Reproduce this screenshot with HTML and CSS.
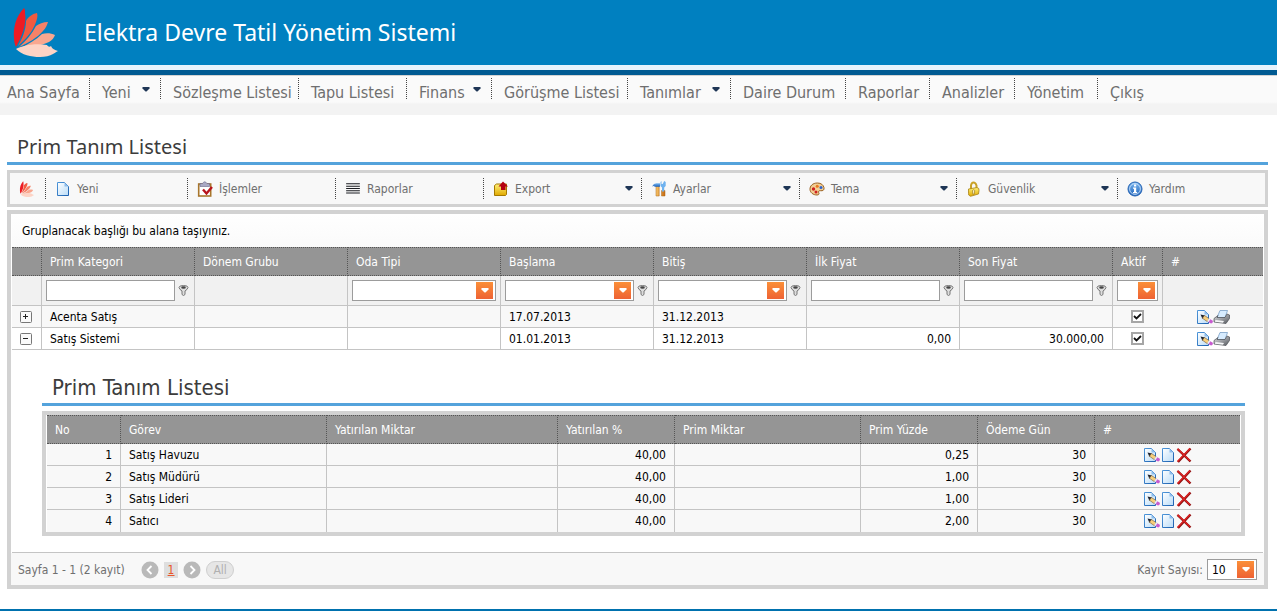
FILE: index.html
```html
<!DOCTYPE html>
<html lang="tr">
<head>
<meta charset="utf-8">
<title>Elektra Devre Tatil Yönetim Sistemi</title>
<link rel="stylesheet" href="styles.css">
</head>
<body>
<svg class="sprite" aria-hidden="true">
  <defs>
    <linearGradient id="paper" x1="0" y1="0" x2="1" y2="1"><stop offset="0" stop-color="#fff"/><stop offset="1" stop-color="#b9dcf8"/></linearGradient>
    <linearGradient id="edge" x1="0" y1="0" x2="1" y2="1"><stop offset="0" stop-color="#4f97da"/><stop offset="1" stop-color="#1c5fae"/></linearGradient>
    <linearGradient id="gold" x1="0" y1="0" x2="0" y2="1"><stop offset="0" stop-color="#fff27a"/><stop offset="1" stop-color="#e0a800"/></linearGradient>
    <linearGradient id="wood" x1="0" y1="0" x2="1" y2="0"><stop offset="0" stop-color="#f8c56a"/><stop offset="1" stop-color="#c66a10"/></linearGradient>
    <linearGradient id="blue" x1="0" y1="0" x2="0" y2="1"><stop offset="0" stop-color="#7db9f2"/><stop offset="1" stop-color="#1a5fb8"/></linearGradient>
    <linearGradient id="steel" x1="0" y1="0" x2="1" y2="1"><stop offset="0" stop-color="#e4e6e9"/><stop offset="1" stop-color="#55585e"/></linearGradient>
    <symbol id="logo" viewBox="0 0 46 50">
      <path fill="#ed1c24" d="M11 1C3 9 0 21 1 31c0 4 1 7 2 9C9 30 14 16 12 6c0-2 0-4-1-5z"/>
      <path fill="#f15a40" d="M24 6c-5 1-9 4-11 8 0 9-4 18-8 25 8-7 15-15 18-24 1-3 2-6 1-9z"/>
      <path fill="#f58268" d="M35 15c-5 0-9 2-12 4-4 8-10 15-17 21 9-4 18-9 24-16 3-3 4-6 5-9z"/>
      <path fill="#f9a78f" d="M42 28c-4-2-9-2-13-1-6 6-14 10-21 14 9-1 20-2 28-6 3-2 5-4 6-7z"/>
      <path fill="#fdd3c5" d="M3 42c6-3 17-6 31-4 1 2 3 2 4 1 1 3 4 4 7 5-2 1-3 2-5 3-3 2-8 3-13 3-9 0-18-2-24-8z"/>
    </symbol>
    <symbol id="page" viewBox="0 0 14 16">
      <path fill="url(#paper)" stroke="url(#edge)" d="M1.500 1.500h7l4 4v9h-11z"/>
      <path fill="#8dbdec" d="M8.500 1.500v4h4z"/>
    </symbol>
    <symbol id="edit" viewBox="0 0 17 16">
      <path fill="url(#paper)" stroke="url(#edge)" d="M1.500 1.500h7l4 4v9h-11z"/>
      <path fill="#8dbdec" d="M8.500 1.500v4h4z"/>
      <path fill="#1f2430" d="M4.500 5.500l4.500 1-2.500 3.500z"/>
      <path fill="#f8cf7b" stroke="#6b5638" stroke-width=".6" d="M8.500 6.500l4.700 3.200-1.800 3-5-3.500z"/>
      <path fill="#e9ecfa" d="M13 9.300l1.500 1-1.800 3-1.500-1z"/>
      <path fill="#c75bd0" d="M14.300 10.300l2.500 1.500q.4 2.400-1.800 2.700l-2.500-1.200z"/>
    </symbol>
    <symbol id="delete" viewBox="0 0 16 16">
      <path fill="none" stroke="#8a1010" stroke-width="2.400" d="M1.500 2L14.500 14.500M14.500 1.500L2 15"/>
      <path fill="none" stroke="#dd2323" stroke-width="1.400" d="M1.500 1.700L14 13.700M14 1.500L1.500 14.500"/>
    </symbol>
    <symbol id="printer" viewBox="0 0 17 16">
      <path fill="#d7ecff" stroke="#7aa0c6" stroke-width=".8" d="M7 1.500h7.500l-2.500 7H4z"/>
      <path fill="url(#steel)" stroke="#4c4f55" stroke-width=".7" d="M1 9.500l4-3-1 2h8l2-3.500 2.500 1v3.500l-3.500 5-12-1.500z"/>
      <path fill="#f6f7f8" d="M2.500 11l8.500 1-1 1.800-8.200-1z"/>
    </symbol>
    <symbol id="tasks" viewBox="0 0 16 16">
      <rect x="1.700" y="3" width="12" height="12" fill="#fff" stroke="#a8762c" stroke-width="1.600"/>
      <path fill="#a9a9c4" stroke="#66668a" stroke-width=".6" d="M3 5.500V2.500H5.500Q7.700-1 10 2.500h2.500v3z"/>
      <path fill="none" stroke="#b8141c" stroke-width="2.400" d="M6 8.500l3.500 4 5.500-6.500"/>
    </symbol>
    <symbol id="lines" viewBox="0 0 14 14">
      <path stroke="#1b1d22" stroke-width=".9" d="M1 2.500h12M1 4.500h12M1 6.500h12M1 8.500h12M1 10.500h12"/>
    </symbol>
    <symbol id="export" viewBox="0 0 16 16">
      <path fill="url(#gold)" stroke="#a47900" d="M1.500 4.500l2-1.500h10v10.500l-1 1h-11z"/>
      <path fill="#b40012" d="M10 .5L15 5.500h-2.500V9h-4.500V5.500H5.500z"/>
    </symbol>
    <symbol id="tools" viewBox="0 0 16 16">
      <path fill="url(#wood)" stroke="#ad6818" stroke-width=".5" d="M5 5h3.200v10H5zM10.500 9.500h3.500V15h-3.500z"/>
      <path fill="url(#blue)" d="M1 5.500Q3 1.800 6 2.300h3v3.500H4Q2.500 4.500 1 5.500z"/>
      <path fill="#6fb2ef" d="M10.500 0v3h1.200l1.500-3 1.500 1v4l-1.500 1.500v4h-2.200v-4L9.500 5V1z"/>
    </symbol>
    <symbol id="palette" viewBox="0 0 16 16">
      <path fill="#f2cf94" stroke="#9a6020" d="M8.500 2C3.500 2 .8 5 1 8.500c.2 3 3 5.500 7 5.500 2 0 2.400-1.200 1.700-2.300-.7-1.500.5-2.300 2-2 2 .4 3.800-.7 3.300-3C14.500 4 12 2 8.500 2z"/>
      <circle cx="4.500" cy="8" r="1.700" fill="#d02020"/><circle cx="8.200" cy="5.200" r="1.500" fill="#e8781e"/><circle cx="7" cy="11" r="1.500" fill="#d02020"/><circle cx="12" cy="6.500" r="1.500" fill="#2c62cf"/>
    </symbol>
    <symbol id="lock" viewBox="0 0 16 16">
      <path fill="none" stroke="#c9a227" stroke-width="2" d="M5 8V4.500Q5.500 1.500 7.500 1.500T10.500 4.500V8"/>
      <path fill="url(#gold)" stroke="#a88314" stroke-width=".8" d="M2.500 8l8.500-1.500q2.500.5 2 3L12.500 13l-8 2.300q-2.500-1-2-3z"/>
      <path fill="#fff8cc" stroke="#8c6a10" stroke-width=".6" d="M6.500 9.500q1.500-1.500 2.200 0L8.200 13l-1.400.3z"/>
    </symbol>
    <symbol id="info" viewBox="0 0 16 16">
      <circle cx="8" cy="8" r="7" fill="url(#blue)" stroke="#2462b2"/><circle cx="8" cy="8" r="5.400" fill="none" stroke="#d6e8fb" stroke-width=".8"/>
      <path fill="#fff" d="M7 3.500h2.200v2H7zM6 6.500h3.200v4.500h1v1.300H6V11h1V7.800H6z"/>
    </symbol>
    <symbol id="filter" viewBox="0 0 11 13">
      <path fill="#ddd" stroke="#777" d="M1 3.500Q1 1.500 5.500 1.500t4.500 2Q9.500 5.500 7 7v3.500l-1.500 1-1.500-1V7Q1.500 5.500 1 3.500z"/>
      <ellipse cx="5.500" cy="3.500" rx="2.300" ry="1.200" fill="#444"/>
    </symbol>
    <symbol id="arrow" viewBox="0 0 8 5"><path fill="currentColor" d="M0.500 0h7v1.500l-3 3h-1l-3-3z"/></symbol>
    <symbol id="plus" viewBox="0 0 12 12"><rect x=".5" y=".5" width="11" height="11" rx="1" fill="#fafafa" stroke="#777"/><path stroke="#222" d="M3 5.500h5M5.500 3v5"/></symbol>
    <symbol id="minus" viewBox="0 0 12 12"><rect x=".5" y=".5" width="11" height="11" rx="1" fill="#fafafa" stroke="#777"/><path stroke="#222" d="M3 5.500h5"/></symbol>
    <symbol id="check" viewBox="0 0 9 9"><path fill="none" stroke="#111" stroke-width="1.800" d="M1 4l2.500 2.500L8 2"/></symbol>
    <symbol id="prev" viewBox="0 0 18 18"><circle cx="9" cy="9" r="8.500" fill="#b9b9b9"/><path fill="none" stroke="#fff" stroke-width="1.800" d="M10.500 5l-4 4 4 4"/></symbol>
    <symbol id="next" viewBox="0 0 18 18"><circle cx="9" cy="9" r="8.500" fill="#b9b9b9"/><path fill="none" stroke="#fff" stroke-width="1.800" d="M7.500 5l4 4-4 4"/></symbol>
  </defs>
</svg>

<header class="header">
  <svg class="logo" role="img" aria-label="Elektra"><use href="#logo"/></svg>
  <div class="brand">Elektra Devre Tatil Yönetim Sistemi</div>
</header>

<nav class="nav">
  <a href="#">Ana Sayfa</a>
  <a href="#">Yeni<svg class="arrow"><use href="#arrow"/></svg></a>
  <a href="#">Sözleşme Listesi</a>
  <a href="#">Tapu Listesi</a>
  <a href="#">Finans<svg class="arrow"><use href="#arrow"/></svg></a>
  <a href="#">Görüşme Listesi</a>
  <a href="#">Tanımlar<svg class="arrow"><use href="#arrow"/></svg></a>
  <a href="#">Daire Durum</a>
  <a href="#">Raporlar</a>
  <a href="#">Analizler</a>
  <a href="#">Yönetim</a>
  <a href="#">Çıkış</a>
</nav>

<main class="main">
  <h1 class="title">Prim Tanım Listesi</h1>

  <div class="toolbar" role="toolbar">
    <button type="button" aria-label="Elektra"><svg class="icon"><use href="#logo"/></svg></button>
    <button type="button"><svg class="icon"><use href="#page"/></svg>Yeni</button>
    <button type="button"><svg class="icon"><use href="#tasks"/></svg>İşlemler</button>
    <button type="button"><svg class="icon"><use href="#lines"/></svg>Raporlar</button>
    <button type="button"><svg class="icon"><use href="#export"/></svg>Export<svg class="arrow"><use href="#arrow"/></svg></button>
    <button type="button"><svg class="icon"><use href="#tools"/></svg>Ayarlar<svg class="arrow"><use href="#arrow"/></svg></button>
    <button type="button"><svg class="icon"><use href="#palette"/></svg>Tema<svg class="arrow"><use href="#arrow"/></svg></button>
    <button type="button"><svg class="icon"><use href="#lock"/></svg>Güvenlik<svg class="arrow"><use href="#arrow"/></svg></button>
    <button type="button"><svg class="icon"><use href="#info"/></svg>Yardım</button>
  </div>

  <section class="panel">
    <p class="group-hint">Gruplanacak başlığı bu alana taşıyınız.</p>
    <table class="grid">
      <colgroup><col class="w-toggle"><col class="w-main"><col class="w-main"><col class="w-main"><col class="w-main"><col class="w-main"><col class="w-main"><col class="w-main"><col class="w-active"><col></colgroup>
      <thead>
        <tr><th></th><th>Prim Kategori</th><th>Dönem Grubu</th><th>Oda Tipi</th><th>Başlama</th><th>Bitiş</th><th>İlk Fiyat</th><th>Son Fiyat</th><th>Aktif</th><th>#</th></tr>
        <tr class="filters">
          <td></td>
          <td><div class="filter"><input class="field" type="text" aria-label="Prim Kategori"><button class="plain" type="button" aria-label="Filtre"><svg class="funnel"><use href="#filter"/></svg></button></div></td>
          <td></td>
          <td><div class="filter"><span class="combo"><select aria-label="Oda Tipi"><option></option></select><span class="drop"><svg class="arrow"><use href="#arrow"/></svg></span></span></div></td>
          <td><div class="filter"><span class="combo"><input type="text" aria-label="Başlama"><button class="drop" type="button" aria-label="Takvim"><svg class="arrow"><use href="#arrow"/></svg></button></span><button class="plain" type="button" aria-label="Filtre"><svg class="funnel"><use href="#filter"/></svg></button></div></td>
          <td><div class="filter"><span class="combo"><input type="text" aria-label="Bitiş"><button class="drop" type="button" aria-label="Takvim"><svg class="arrow"><use href="#arrow"/></svg></button></span><button class="plain" type="button" aria-label="Filtre"><svg class="funnel"><use href="#filter"/></svg></button></div></td>
          <td><div class="filter"><input class="field" type="text" aria-label="İlk Fiyat"><button class="plain" type="button" aria-label="Filtre"><svg class="funnel"><use href="#filter"/></svg></button></div></td>
          <td><div class="filter"><input class="field" type="text" aria-label="Son Fiyat"><button class="plain" type="button" aria-label="Filtre"><svg class="funnel"><use href="#filter"/></svg></button></div></td>
          <td><div class="filter"><span class="combo"><select aria-label="Aktif"><option></option></select><span class="drop"><svg class="arrow"><use href="#arrow"/></svg></span></span></div></td>
          <td></td>
        </tr>
      </thead>
      <tbody>
        <tr class="alt">
          <td class="toggle"><button class="plain" type="button" aria-label="Aç"><svg class="box"><use href="#plus"/></svg></button></td>
          <td>Acenta Satış</td><td></td><td></td><td>17.07.2013</td><td>31.12.2013</td><td></td><td></td>
          <td><label class="check"><input type="checkbox" aria-label="Aktif" checked><svg><use href="#check"/></svg></label></td>
          <td><div class="actions"><button class="plain" type="button" aria-label="Düzenle"><svg class="wide"><use href="#edit"/></svg></button><button class="plain" type="button" aria-label="Yazdır"><svg class="wide"><use href="#printer"/></svg></button></div></td>
        </tr>
        <tr>
          <td class="toggle"><button class="plain" type="button" aria-label="Kapat"><svg class="box"><use href="#minus"/></svg></button></td>
          <td>Satış Sistemi</td><td></td><td></td><td>01.01.2013</td><td>31.12.2013</td><td class="num">0,00</td><td class="num">30.000,00</td>
          <td><label class="check"><input type="checkbox" aria-label="Aktif" checked><svg><use href="#check"/></svg></label></td>
          <td><div class="actions"><button class="plain" type="button" aria-label="Düzenle"><svg class="wide"><use href="#edit"/></svg></button><button class="plain" type="button" aria-label="Yazdır"><svg class="wide"><use href="#printer"/></svg></button></div></td>
        </tr>
        <tr class="detail">
          <td colspan="10">
            <h2 class="title title-inner">Prim Tanım Listesi</h2>
            <div class="panel panel-inner">
              <table class="grid">
                <colgroup><col class="w-no"><col class="w-role"><col class="w-paid"><col class="w-rate"><col class="w-amount"><col class="w-rate"><col class="w-rate"><col></colgroup>
                <thead><tr><th>No</th><th>Görev</th><th>Yatırılan Miktar</th><th>Yatırılan %</th><th>Prim Miktar</th><th>Prim Yüzde</th><th>Ödeme Gün</th><th>#</th></tr></thead>
                <tbody>
                  <tr class="alt"><td class="num">1</td><td>Satış Havuzu</td><td></td><td class="num">40,00</td><td></td><td class="num">0,25</td><td class="num">30</td><td><div class="actions"><button class="plain" type="button" aria-label="Düzenle"><svg class="wide"><use href="#edit"/></svg></button><button class="plain" type="button" aria-label="Yeni"><svg class="sheet"><use href="#page"/></svg></button><button class="plain" type="button" aria-label="Sil"><svg class="icon"><use href="#delete"/></svg></button></div></td></tr>
                  <tr class="alt"><td class="num">2</td><td>Satış Müdürü</td><td></td><td class="num">40,00</td><td></td><td class="num">1,00</td><td class="num">30</td><td><div class="actions"><button class="plain" type="button" aria-label="Düzenle"><svg class="wide"><use href="#edit"/></svg></button><button class="plain" type="button" aria-label="Yeni"><svg class="sheet"><use href="#page"/></svg></button><button class="plain" type="button" aria-label="Sil"><svg class="icon"><use href="#delete"/></svg></button></div></td></tr>
                  <tr class="alt"><td class="num">3</td><td>Satış Lideri</td><td></td><td class="num">40,00</td><td></td><td class="num">1,00</td><td class="num">30</td><td><div class="actions"><button class="plain" type="button" aria-label="Düzenle"><svg class="wide"><use href="#edit"/></svg></button><button class="plain" type="button" aria-label="Yeni"><svg class="sheet"><use href="#page"/></svg></button><button class="plain" type="button" aria-label="Sil"><svg class="icon"><use href="#delete"/></svg></button></div></td></tr>
                  <tr class="alt"><td class="num">4</td><td>Satıcı</td><td></td><td class="num">40,00</td><td></td><td class="num">2,00</td><td class="num">30</td><td><div class="actions"><button class="plain" type="button" aria-label="Düzenle"><svg class="wide"><use href="#edit"/></svg></button><button class="plain" type="button" aria-label="Yeni"><svg class="sheet"><use href="#page"/></svg></button><button class="plain" type="button" aria-label="Sil"><svg class="icon"><use href="#delete"/></svg></button></div></td></tr>
                </tbody>
              </table>
            </div>
          </td>
        </tr>
      </tbody>
    </table>
    <footer class="pager">
      <span class="summary">Sayfa 1 - 1 (2 kayıt)</span>
      <button class="plain" type="button" aria-label="Önceki"><svg class="round"><use href="#prev"/></svg></button>
      <a class="current" href="#">1</a>
      <button class="plain" type="button" aria-label="Sonraki"><svg class="round"><use href="#next"/></svg></button>
      <button class="all" type="button">All</button>
      <label class="size-label" for="page-size">Kayıt Sayısı:</label>
      <span class="combo page-size"><select id="page-size"><option>10</option></select><span class="drop"><svg class="arrow"><use href="#arrow"/></svg></span></span>
    </footer>
  </section>
</main>
<div class="page-end"></div>
</body>
</html>
```
FILE: styles.css
```css
* { box-sizing: border-box; }

body {
  margin: 0;
  background: #fff;
  color: #000;
  font: 12px/16px "DejaVu Sans Condensed", "Noto Sans", sans-serif;
}

svg { display: block; flex: none; }
input, select, button { font: inherit; color: inherit; margin: 0; }
.sprite { width: 0; height: 0; }
.plain { display: block; padding: 0; border: 0; background: none; }

.header {
  display: flex;
  align-items: center;
  height: 75px;
  padding: 0 13px 12px;
  background: linear-gradient(#0080c0 65px, #e6f3fc 65px, #e6f3fc 70px, #005a92 70px);
}
.logo { width: 46px; height: 50px; }
.brand {
  margin-left: 25px;
  color: #fff;
  font: 23px/32px "Noto Sans", sans-serif;
}

.nav {
  display: grid;
  grid-template-columns: 90px 71px 138px 108px 85px 136px 103px 115px 84px 85px 83px auto;
  height: 40px;
  padding-top: 2px;
  border-top: 1px solid #d2d2d2;
  background: linear-gradient(#fafafa 26px, #f3f3f3 28px);
}
.nav a {
  display: flex;
  align-items: center;
  height: 21px;
  padding: 8px 0 0 12px;
  border-right: 1px dotted #444;
  color: #6f6f6f;
  font-size: 16px;
  line-height: 20px;
  text-decoration: none;
  white-space: nowrap;
}
.nav a:first-child { padding-left: 7px; }
.nav a:last-child { border-right: 0; }
.arrow { width: 8px; height: 5px; color: #1f3656; }
.nav .arrow { margin: 0 10px 6px auto; }

.main { padding: 18px 9px 20px 7px; }
.title {
  margin: 0 0 5px;
  padding: 0 10px 2px;
  border-bottom: 3px solid #54a3dc;
  color: #3c3c3c;
  font: 20px/27px "Noto Sans", sans-serif;
}
.title-inner {
  padding-bottom: 0;
  font: 22px/31px "DejaVu Sans Condensed", "Noto Sans", sans-serif;
}

.toolbar {
  display: grid;
  grid-template-columns: 36px 142px 148px 148px 158px 158px 157px 161px auto;
  height: 37px;
  margin-bottom: 3px;
  padding: 5px 0;
  border: 3px solid #d2d2d2;
  background: #f8f8f8;
}
.toolbar button {
  display: flex;
  align-items: center;
  gap: 6px;
  height: 21px;
  padding: 0 8px 0 9px;
  border: 0;
  border-right: 1px dotted #444;
  background: none;
  color: #6f6f6f;
}
.toolbar button:last-child { border-right: 0; }
.toolbar .arrow { margin-left: auto; }
.icon { width: 16px; height: 16px; }

.panel { border: 4px solid #d2d2d2; padding: 0 1px; }
.group-hint {
  margin: 0;
  padding: 9px 10px 8px;
  background: linear-gradient(#fff, #fafafa);
}

.grid {
  width: 100%;
  table-layout: fixed;
  border-collapse: separate;
  border-spacing: 0;
}
.w-toggle { width: 30px; }
.w-main { width: 153px; }
.w-active { width: 50px; }
.w-no { width: 74px; }
.w-role { width: 206px; }
.w-paid { width: 231px; }
.w-rate { width: 117px; }
.w-amount { width: 186px; }

.grid th {
  height: 29px;
  padding: 0 8px;
  border: 1px dotted #555;
  border-width: 1px 1px 1px 0;
  background: #959595;
  color: #fff;
  font-weight: normal;
  text-align: left;
}
.grid td {
  height: 22px;
  padding: 0 8px;
  border: 1px solid #c4c4c4;
  border-width: 0 1px 1px 0;
}
.grid th:last-child, .grid td:last-child { border-right: 0; }
.grid .filters td { height: 30px; padding: 0 4px; background: #f1f1f1; }
.alt td { background: #f8f8f8; }
.grid .num { text-align: right; }
.panel-inner .grid tr:last-child td { border-bottom: 0; }
.grid .detail > td { padding: 22px 18px 16px 30px; background: #fff; }

.filter { display: flex; align-items: center; gap: 3px; }
.filter .plain { margin-right: 1px; }
.field {
  flex: 1;
  min-width: 0;
  height: 21px;
  padding: 0 4px;
  border: 1px solid #9c9c9c;
  background: #fff;
}
.combo {
  position: relative;
  display: flex;
  flex: 1;
  min-width: 0;
  height: 21px;
  padding: 1px 2px;
  border: 1px solid #9c9c9c;
  background: #fff;
}
.combo input, .combo select {
  flex: 1;
  min-width: 0;
  padding: 0 2px;
  border: 0;
  background: none;
  appearance: none;
}
.drop {
  display: grid;
  place-items: center;
  width: 17px;
  height: 17px;
  padding: 0;
  border: 0;
  background: linear-gradient(#fb8f38, #ee6234);
  pointer-events: none;
}
.drop .arrow { color: #fff; }
.funnel { width: 11px; height: 13px; }

.box { width: 12px; height: 12px; }
.check {
  display: grid;
  place-items: center;
  width: 13px;
  height: 13px;
  margin: 0 auto;
  border: 2px solid #a6a6a6;
  background: #fff;
}
.check input, .check svg { grid-area: 1 / 1; width: 9px; height: 9px; }
.check input { appearance: none; }
.check svg { visibility: hidden; pointer-events: none; }
.check input:checked + svg { visibility: visible; }
.actions { display: flex; justify-content: center; }
.wide { width: 17px; height: 16px; }
.sheet { width: 14px; height: 16px; margin: 0 1px; }

.pager {
  display: flex;
  align-items: center;
  height: 32px;
  margin: 0 -1px;
  padding: 1px 7px 0;
  background: #f8f8f8;
  color: #6f6f6f;
}
.summary { margin-right: 16px; }
.round { width: 18px; height: 18px; }
.current {
  margin: 0 5px;
  padding: 0 4px;
  background: #dedede;
  color: #e8562a;
}
.all {
  margin-left: 5px;
  padding: 0 6px;
  border: 1px solid #cfcfcf;
  border-radius: 9px;
  background: #e6e6e6;
  color: #b0b0b0;
}
.size-label { margin-left: auto; }
.page-size { flex: none; width: 50px; margin-left: 4px; color: #000; }

.page-end { height: 3px; background: #0071ae; }
```
